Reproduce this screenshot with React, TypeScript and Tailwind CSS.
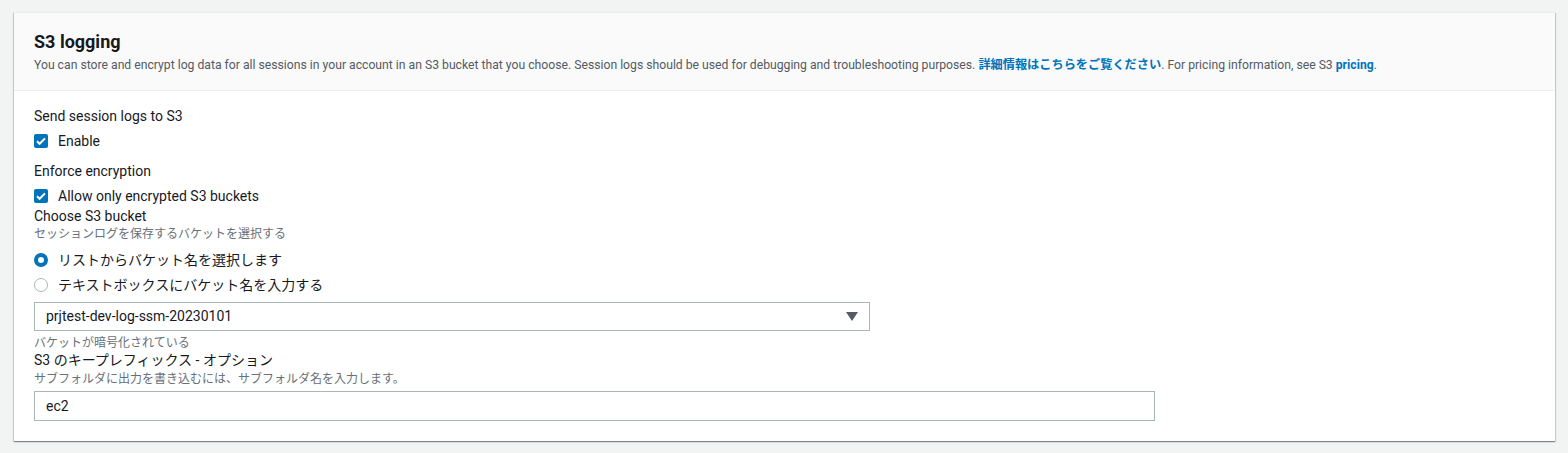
const font = { fontFamily: 'Roboto, "Noto Sans CJK JP", sans-serif' };

function Checkbox({ label, className = "" }: { label: string; className?: string }) {
  return (
    <div className={`flex h-[22px] items-center gap-[10px] ${className}`}>
      <span className="flex h-[14px] w-[14px] items-center justify-center rounded-[2px] bg-[#0073bb]">
        <svg viewBox="0 0 14 14" className="h-[14px] w-[14px]">
          <path d="M3 7.2l2.6 2.6L11 4.4" fill="none" stroke="white" strokeWidth="2" />
        </svg>
      </span>
      <span className="text-[14px] text-[#16191f]">{label}</span>
    </div>
  );
}

function Radio({ label, checked, className = "" }: { label: string; checked?: boolean; className?: string }) {
  return (
    <div className={`flex h-[22px] items-center gap-[10px] ${className}`}>
      {checked ? (
        <span className="h-[14px] w-[14px] rounded-full border-[4px] border-[#0073bb] bg-white" />
      ) : (
        <span className="h-[14px] w-[14px] rounded-full border-[1.5px] border-[#aab7b8] bg-white" />
      )}
      <span className="text-[14px] text-[#16191f]">{label}</span>
    </div>
  );
}

export default function App() {
  return (
    <div className="min-h-[453px] bg-[#f2f3f3] pt-[12px] pl-[14px] pr-[13px] pb-[12px]" style={font}>
      <div className="bg-white shadow-[0_1px_1px_0_rgba(0,28,36,0.3),1px_1px_1px_0_rgba(0,28,36,0.15),-1px_1px_1px_0_rgba(0,28,36,0.15)] border-t border-[#eaeded]">
        <div className="border-b border-[#eaeded] bg-[#fafafa] px-[20px] pt-[18px] pb-[17px]">
          <h2 className="text-[18px] font-bold leading-[22px] text-[#16191f]">S3 logging</h2>
          <p className="mt-[4px] text-[12.2px] leading-[16px] text-[#545b64]">
            You can store and encrypt log data for all sessions in your account in an S3 bucket that you choose. Session logs should be used for debugging and troubleshooting purposes.{" "}
            <span className="font-bold text-[#0073bb]">詳細情報はこちらをご覧ください</span>. For pricing information, see S3{" "}
            <span className="font-bold text-[#0073bb]">pricing</span>.
          </p>
        </div>
        <div className="px-[20px] pt-[15px] pb-[20px] text-[#16191f]">
          <div className="text-[14px] leading-[20px]">Send session logs to S3</div>
          <Checkbox label="Enable" className="mt-[4px]" />
          <div className="mt-[9px] text-[14px] leading-[20px]">Enforce encryption</div>
          <Checkbox label="Allow only encrypted S3 buckets" className="mt-[4px]" />
          <div className="text-[14px] leading-[18px]">Choose S3 bucket</div>
          <div className="mt-[1px] text-[12px] leading-[16px] text-[#687078]">セッションログを保存するバケットを選択する</div>
          <Radio label="リストからバケット名を選択します" checked className="mt-[7px]" />
          <Radio label="テキストボックスにバケット名を入力する" className="mt-[3px]" />
          <div className="mt-[6px] flex h-[29px] w-[836px] items-center justify-between border border-[#aab7b8] bg-white pl-[11px] pr-[11px]">
            <span className="text-[14px]">prjtest-dev-log-ssm-20230101</span>
            <svg viewBox="0 0 12 9" className="h-[9px] w-[12px]">
              <path d="M0 0h12L6 9z" fill="#545b64" />
            </svg>
          </div>
          <div className="mt-[4px] text-[12px] leading-[16px] text-[#687078]">バケットが暗号化されている</div>
          <div className="text-[14px] leading-[18px]">S3 のキープレフィックス - オプション</div>
          <div className="mt-[2px] text-[12px] leading-[16px] text-[#687078]">サブフォルダに出力を書き込むには、サブフォルダ名を入力します。</div>
          <div className="mt-[4px] flex h-[30px] w-[1121px] items-center border border-[#aab7b8] bg-white pl-[11px]">
            <span className="text-[14px]">ec2</span>
          </div>
        </div>
      </div>
    </div>
  );
}
